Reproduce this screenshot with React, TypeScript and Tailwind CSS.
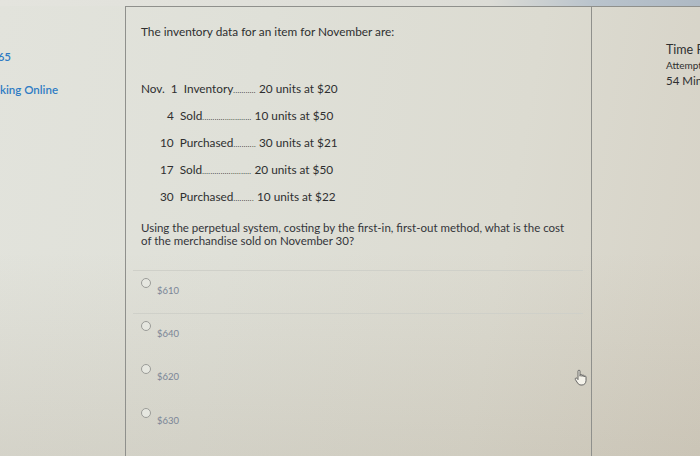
import React from "react"

const rows = [
  { label: "Nov.  1  Inventory", dots: "...........", value: "20 units at $20", indent: "pl-0" },
  { label: "4  Sold", dots: "........................", value: "10 units at $50", indent: "pl-[26px]" },
  { label: "10  Purchased", dots: "...........", value: "30 units at $21", indent: "pl-[19px]" },
  { label: "17  Sold", dots: "........................", value: "20 units at $50", indent: "pl-[19px]" },
  { label: "30  Purchased", dots: "..........", value: "10 units at $22", indent: "pl-[19px]" },
]

const options = ["$610", "$640", "$620", "$630"]

const Hand = () => (
  <svg width="14" height="17" viewBox="0 0 14 17" fill="#f4f2ea" stroke="#5a5a5a" strokeWidth="0.9">
    <path d="M4 8V2.2a1 1 0 0 1 2 0V7 M6 6.5a1 1 0 0 1 2 0V7.5 M8 7a1 1 0 0 1 2 0v1 M10 8a1 1 0 0 1 2 0v3.5c0 2.6-1.6 4.5-4 4.5H7c-1.6 0-2.6-.8-3.4-2L1.4 10.6a1 1 0 0 1 1.6-1.2L4 10.6V8" />
  </svg>
)

export default function App() {
  return (
    <div className="relative w-[700px] h-[456px] overflow-hidden bg-[linear-gradient(100deg,#e2e3dc_0%,#dfe0d8_35%,#dcdbd1_70%,#d6d2c6_100%)] font-['Lato','Noto_Sans',sans-serif] text-[#2e2f30]">
      <div className="absolute inset-0 bg-[linear-gradient(180deg,rgba(0,0,0,0)_55%,rgba(120,100,70,0.12)_100%)] pointer-events-none" />
      <div className="relative flex flex-col h-full">
        <div className="h-[6px] bg-[linear-gradient(90deg,#e4e4de_0%,#dcdcd6_70%,#b9c3cc_85%,#aeb9c4_100%)]" />
        <div className="flex flex-1">
          {/* left nav */}
          <div className="w-[125px] shrink-0 pt-[42px] text-[#2f7cc4] text-[11.5px] font-semibold whitespace-nowrap overflow-hidden">
            <div className="-ml-[9px]">365</div>
            <div className="mt-[16px]">king Online</div>
          </div>

          {/* question */}
          <div className="w-[467px] shrink-0 border-l border-t border-r border-[#8f908c] pl-[15px] pt-[17px]">
            <div className="text-[11.8px] leading-[15px]">The inventory data for an item for November are:</div>

            <div className="mt-[42px] flex flex-col gap-[12px] text-[11.8px]">
              {rows.map(r => (
                <div key={r.label} className={`flex items-baseline h-[15px] leading-[15px] whitespace-pre ${r.indent}`}>
                  <span>{r.label}</span>
                  <span className="text-[7px] leading-[7px] tracking-[0.4px]">{r.dots}</span>
                  <span> {r.value}</span>
                </div>
              ))}
            </div>

            <div className="mt-[17px] text-[11.5px] leading-[13px] pr-[18px] text-[#34353a]">
              Using the perpetual system, costing by the first-in, first-out method, what is the cost of the merchandise sold on November 30?
            </div>

            <div className="mt-[23px] -ml-[8px] mr-[8px]">
              {options.map((o, i) => (
                <div
                  key={o}
                  className={`flex items-start h-[43.5px] pl-[8px] pt-[5px] ${i === 0 ? "border-t border-b border-[#cfd0c9]" : ""}`}
                >
                  <span className="mt-[2px] w-[10px] h-[10px] rounded-full border border-[#9b9c98] bg-[#e6e7e0]" />
                  <span className="ml-[6px] mt-[8px] text-[9.5px] text-[#7a8596]">{o}</span>
                </div>
              ))}
            </div>
          </div>

          {/* right panel */}
          <div className="flex-1 min-w-0 overflow-hidden border-t border-[#8f908c] pt-[35px] pl-[74px] whitespace-nowrap">
            <div className="text-[12.5px] leading-[15px]">Time Remaining</div>
            <div className="text-[10px] leading-[13px] mt-[2px]">Attempt due</div>
            <div className="text-[11.5px] leading-[14px] mt-[2px]">54 Minutes</div>
          </div>
        </div>
      </div>

      <div className="absolute left-[574px] top-[369px]">
        <Hand />
      </div>
    </div>
  )
}
